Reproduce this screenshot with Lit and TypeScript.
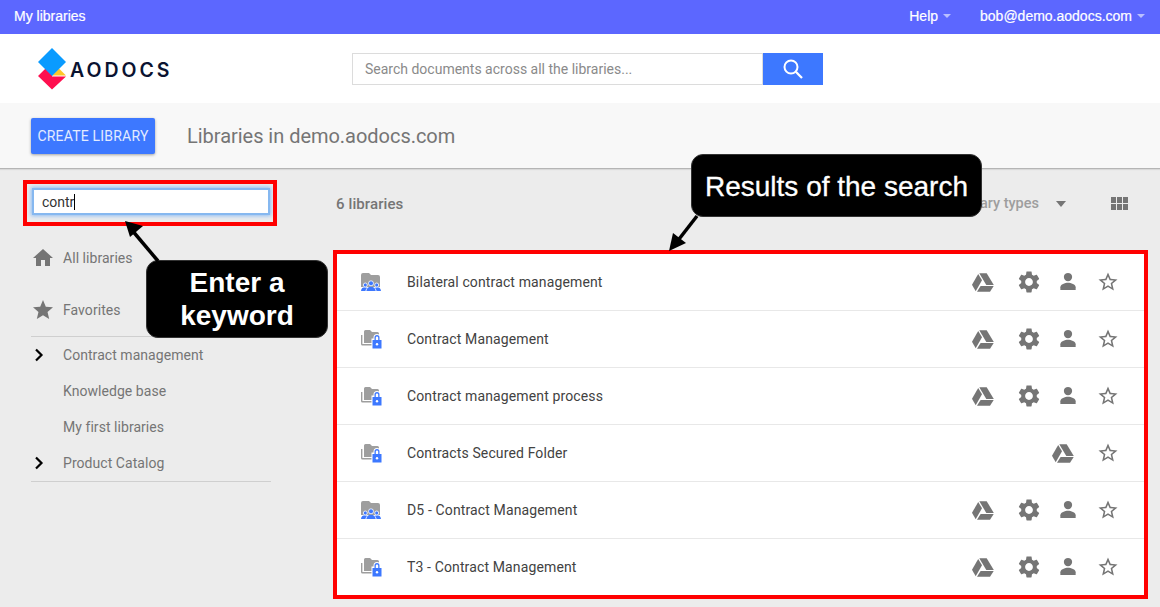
import { LitElement, html, css, svg } from "lit";
import { customElement } from "lit/decorators.js";

const P = {
  home: "M10 20v-6h4v6h5v-8h3L12 3 2 12h3v8z",
  star: "M12 17.27L18.18 21l-1.64-7.03L22 9.24l-7.19-.61L12 2 9.19 8.63 2 9.24l5.46 4.73L5.82 21z",
  starO: "M22 9.24l-7.19-.62L12 2 9.19 8.63 2 9.24l5.46 4.73L5.82 21 12 17.27 18.18 21l-1.63-7.03L22 9.24zM12 15.4l-3.76 2.27 1-4.28-3.32-2.88 4.38-.38L12 6.1l1.71 4.04 4.38.38-3.32 2.88 1 4.28L12 15.4z",
  gear: "M19.14 12.94c.04-.3.06-.61.06-.94 0-.32-.02-.64-.07-.94l2.03-1.58c.18-.14.23-.41.12-.61l-1.92-3.32c-.12-.22-.37-.29-.59-.22l-2.39.96c-.5-.38-1.03-.7-1.62-.94l-.36-2.54c-.04-.24-.24-.41-.48-.41h-3.84c-.24 0-.43.17-.47.41l-.36 2.54c-.59.24-1.13.57-1.62.94l-2.39-.96c-.22-.08-.47 0-.59.22L2.74 8.87c-.12.21-.08.47.12.61l2.03 1.58c-.05.3-.09.63-.09.94s.02.64.07.94l-2.03 1.58c-.18.14-.23.41-.12.61l1.92 3.32c.12.22.37.29.59.22l2.39-.96c.5.38 1.03.7 1.62.94l.36 2.54c.05.24.24.41.48.41h3.84c.24 0 .44-.17.47-.41l.36-2.54c.59-.24 1.13-.56 1.62-.94l2.39.96c.22.08.47 0 .59-.22l1.92-3.32c.12-.22.07-.47-.12-.61l-2.01-1.58zM12 15.6c-1.98 0-3.6-1.62-3.6-3.6s1.62-3.6 3.6-3.6 3.6 1.62 3.6 3.6-1.62 3.6-3.6 3.6z",
};

const icon = (d: string, cls: string) =>
  html`<svg class=${cls} viewBox="0 0 24 24"><path d=${d}></path></svg>`;

const drive = html`<svg class="i drive" viewBox="0 0 24 24">
  <path d="M8.3 3.2h7.4l7.1 11.7h-7.5z"></path>
  <path d="M7.2 3.9l3.8 6.3L4.7 21.2 1 14.8z"></path>
  <path d="M9.6 15.9h13.1l-3.7 5.9H6z"></path>
</svg>`;

const person = html`<svg class="i person" viewBox="0 0 24 24">
  <circle cx="12" cy="6.5" r="4.6"></circle>
  <path d="M3.5 21v-3.2c0-3.3 5.2-5 8.5-5s8.5 1.700 8.5 5V21z"></path>
</svg>`;

const folderShared = html`<svg class="fold" viewBox="0 0 22 20">
  <path class="g" d="M1 3a2 2 0 0 1 2-2h6l2 2h7a2 2 0 0 1 2 2v10H1z"></path>
  <g class="b">
    <path d="M1 19c.2-2.700 2-3.700 4-3.700.9 0 1.600.2 2.200.6-1 .7-1.600 1.800-1.700 3.100zM21 19c-.2-2.700-2-3.700-4-3.700-.9 0-1.600.2-2.200.6 1 .7 1.600 1.800 1.700 3.100z"></path>
    <path d="M6.300 19c.2-2.700 2.300-4.200 4.700-4.200s4.500 1.500 4.700 4.200z"></path>
    <circle cx="11" cy="11.300" r="2.500" stroke="#fff" stroke-width=".8"></circle>
    <circle cx="5.300" cy="13" r="2" stroke="#fff" stroke-width=".8"></circle>
    <circle cx="16.700" cy="13" r="2" stroke="#fff" stroke-width=".8"></circle>
  </g>
</svg>`;

const folderLock = html`<svg class="fold" viewBox="0 0 22 20">
  <path class="g" d="M1 6h1.400v9H13v1.500H2.500A1.500 1.500 0 0 1 1 15z"></path>
  <path class="g" d="M4 2.500A1.500 1.500 0 0 1 5.500 1H10l2 2h5.500A1.500 1.500 0 0 1 19 4.500V14H4z"></path>
  <path d="M11.500 20V9.500h2v-1a3.500 3.500 0 0 1 7 0v1h1V20z" fill="#fff"></path>
  <path class="b" d="M14.500 11h-2v8.500h9V11h-2V8.600a2.500 2.500 0 0 0-5 0zm1.300 0V8.600a1.200 1.200 0 0 1 2.400 0V11z"></path>
  <circle cx="17" cy="15.300" r="1.200" fill="#fff"></circle>
</svg>`;

const rows = [
  { name: "Bilateral contract management", shared: true, full: true },
  { name: "Contract Management", shared: false, full: true },
  { name: "Contract management process", shared: false, full: true },
  { name: "Contracts Secured Folder", shared: false, full: false },
  { name: "D5 - Contract Management", shared: true, full: true },
  { name: "T3 - Contract Management", shared: false, full: true },
];

const chevron = html`<svg class="chev" viewBox="0 0 10 14"><path d="M2 1.500L7.500 7 2 12.500" fill="none" stroke="#000" stroke-width="2.200"></path></svg>`;

@customElement("app-root")
export class AppRoot extends LitElement {
  static styles = css`
    :host { display: block; position: relative; width: 1160px; height: 607px; overflow: hidden; background: #ececec; font-family: Roboto, sans-serif; }
    * { box-sizing: border-box; }

    .top { height: 34px; background: #5c67ff; color: #fff; display: flex; align-items: center; padding: 0 15px 3px 14px; font: 14px/16px "Liberation Sans", sans-serif; -webkit-text-stroke: .2px #fff; }
    .top .sp { flex: 1; }
    .caret { width: 0; height: 0; border: 4px solid transparent; border-top: 4px solid #b9bfff; border-bottom: 0; }
    .top .help { margin-right: 29px; display: flex; align-items: center; }
    .top .user { display: flex; align-items: center; }
    .top .caret { margin-left: 5px; margin-top: 1px; }

    .head { height: 69px; background: #fff; display: flex; align-items: center; padding: 0 0 0 38px; }
    .logo { display: flex; align-items: center; width: 314px; height: 42px; }
    .logo svg { width: 28px; height: 42px; flex: none; }
    .logo span { font: 600 19.500px/20px Inter, sans-serif; letter-spacing: 3px; color: #0a1330; margin: 3px 0 0 4px; }
    .search { display: flex; height: 32px; width: 471px; }
    .search .box { width: 411px; background: #fff; border: 1px solid #dcdcdc; color: #8a8a8a; font-size: 14px; line-height: 30px; padding-left: 12px; }
    .search .go { width: 60px; background: #3d78ff; display: flex; align-items: center; justify-content: center; }
    .search svg { width: 22px; height: 22px; }

    .bar { height: 66px; background: #f8f8f8; border-bottom: 1px solid #b5b5b5; box-shadow: 0 1px 1px rgba(0,0,0,.08); display: flex; align-items: center; padding: 1px 0 0 31px; }
    .create { width: 124px; height: 36px; background: #3d78ff; color: #e3ebff; border-radius: 2px; box-shadow: 0 1px 3px rgba(0,0,0,.35); font-size: 14px; display: flex; align-items: center; justify-content: center; letter-spacing: .2px; }
    .bar h1 { margin: 0 0 0 32px; font-size: 20px; font-weight: 400; color: #757575; letter-spacing: -.03px; }

    .main { display: flex; }
    .side { width: 333px; padding: 19px 0 0 31px; flex: none; }
    .side .inner { width: 240px; }
    .field { position: relative; margin: 0 0 0 1px; width: 238px; height: 27px; background: #fff; border: 2px solid #86b8f0; box-shadow: 0 0 4px 1px #8dbdf5; font-size: 14px; color: #333; line-height: 24px; padding-left: 8px; display: flex; align-items: center; }
    .cursor { width: 1px; height: 16px; background: #000; }
    .nav { display: flex; align-items: center; font-size: 14px; color: #757575; letter-spacing: .05px; height: 36px; }
    .nav.big { height: 52px; }
    .nav .lead { width: 32px; flex: none; display: flex; justify-content: flex-start; }
    .nav svg.n { width: 24px; height: 24px; fill: #757575; }
    .chev { width: 10px; height: 14px; margin-left: 3px; }
    .rule { height: 1px; background: #cfcfcf; }
    .navs { margin-top: 17px; }

    .content { width: 815px; }
    .tools { height: 81px; padding: 0 20px 13px 3px; display: flex; align-items: center; color: #757575; font-size: 15px; }
    .tools .count { font-weight: 500; letter-spacing: .1px; margin-top: 1px; }
    .tools .sp { flex: 1; }
    .types { color: #9e9e9e; font-weight: 500; font-size: 14.500px; margin-right: 1px; }
    .tools .caret2 { width: 0; height: 0; border: 5.500px solid transparent; border-top: 6px solid #757575; border-bottom: 0; margin: 1px 0 0 16px; }
    .grid { width: 17px; height: 13px; margin: 0 0 0 45px; display: grid; grid-template-columns: repeat(3, 5px); grid-auto-rows: 6px; gap: 1px; }
    .grid i { background: #757575; }

    .list { border: 4px solid #f00; background: #fff; }
    .row { height: 57px; display: flex; align-items: center; padding: 0 24px 0 23px; border-top: 1px solid #e8e8e8; font-size: 14px; color: #424242; letter-spacing: .13px; }
    .row:first-child { height: 56px; border-top: 0; }
    .fold { width: 22px; height: 20px; flex: none; margin-right: 25px; }
    .g { fill: #9e9e9e; }
    .b { fill: #3d78ff; }
    .row .sp { flex: 1; }
    .i { width: 24px; height: 24px; fill: #757575; flex: none; }
    .i.drive { margin-right: 21px; }
    .i.gear { width: 26px; height: 26px; margin-right: 14px; }
    .i.person { margin-right: 16px; transform: scale(.9); }
    .i.star { transform: scale(.95); }

    .note { position: absolute; background: #000; color: #fff; border-radius: 12px; border: 1px solid #333; font-family: "Liberation Sans", sans-serif; text-align: center; }
    .note.res { left: 691px; top: 154px; width: 291px; height: 63px; font-size: 28px; line-height: 63px; white-space: nowrap; -webkit-text-stroke: .3px #fff; }
    .note.key { left: 146px; top: 260px; width: 182px; height: 78px; font-size: 28px; font-weight: 700; line-height: 33px; padding-top: 5px; }
    .hl { position: absolute; left: 23px; top: 180px; width: 254px; height: 46px; border: 4px solid #f00; }
    .arrows { position: absolute; left: 0; top: 0; width: 1160px; height: 607px; pointer-events: none; }
  `;

  render() {
    return html`
      <div class="top">
        <span>My libraries</span><span class="sp"></span>
        <span class="help">Help<i class="caret"></i></span>
        <span class="user">bob@demo.aodocs.com<i class="caret"></i></span>
      </div>
      <div class="head">
        <div class="logo">
          <svg viewBox="0 0 28 42">
            <path d="M0 28L14 14V28.500H28L14 41.500z" fill="#ff0f4f"></path>
            <path d="M14 27.500L21 20.500 28 27.500z" fill="#ffc629"></path>
            <path d="M14 0l14 14-14 14L0 14z" fill="#0a9bff"></path>
          </svg>
          <span>AODOCS</span>
        </div>
        <div class="search">
          <div class="box">Search documents across all the libraries...</div>
          <div class="go"><svg viewBox="0 0 22 22"><circle cx="9" cy="9" r="6.500" fill="none" stroke="#fff" stroke-width="2"></circle><path d="M13.800 13.800L20 20" stroke="#fff" stroke-width="2.300" fill="none"></path></svg></div>
        </div>
      </div>
      <div class="bar">
        <div class="create">CREATE LIBRARY</div>
        <h1>Libraries in demo.aodocs.com</h1>
      </div>
      <div class="main">
        <div class="side">
          <div class="inner">
            <div class="field">contr<i class="cursor"></i></div>
            <div class="navs">
              <div class="nav big"><span class="lead">${icon(P.home, "n")}</span>All libraries</div>
              <div class="nav big"><span class="lead">${icon(P.star, "n")}</span>Favorites</div>
            </div>
            <div class="rule"></div>
            <div class="tree">
              <div class="nav"><span class="lead">${chevron}</span>Contract management</div>
              <div class="nav"><span class="lead"></span>Knowledge base</div>
              <div class="nav"><span class="lead"></span>My first libraries</div>
              <div class="nav"><span class="lead">${chevron}</span>Product Catalog</div>
            </div>
            <div class="rule"></div>
          </div>
        </div>
        <div class="content">
          <div class="tools">
            <span class="count">6 libraries</span><span class="sp"></span>
            <span class="types">All library types</span><i class="caret2"></i>
            <div class="grid">${Array.from({ length: 6 }, () => html`<i></i>`)}</div>
          </div>
          <div class="list">
            ${rows.map(
              (r) => html`<div class="row">
                ${r.shared ? folderShared : folderLock}
                <span>${r.name}</span><span class="sp"></span>
                ${drive}
                ${r.full ? html`${icon(P.gear, "i gear")}${person}` : ""}
                ${icon(P.starO, "i star")}
              </div>`
            )}
          </div>
        </div>
      </div>

      <div class="hl"></div>
      <div class="note res">Results of the search</div>
      <div class="note key">Enter a<br />keyword</div>
      <svg class="arrows" viewBox="0 0 1160 607">
        ${svg`<path d="M158 261L131 229" stroke="#000" stroke-width="3.500" fill="none"></path>
        <path d="M125 221l18 5-13 11z" fill="#000"></path>
        <path d="M697 216L676 243" stroke="#000" stroke-width="3.500" fill="none"></path>
        <path d="M669 251l4-18 13 10z" fill="#000"></path>`}
      </svg>
    `;
  }
}
